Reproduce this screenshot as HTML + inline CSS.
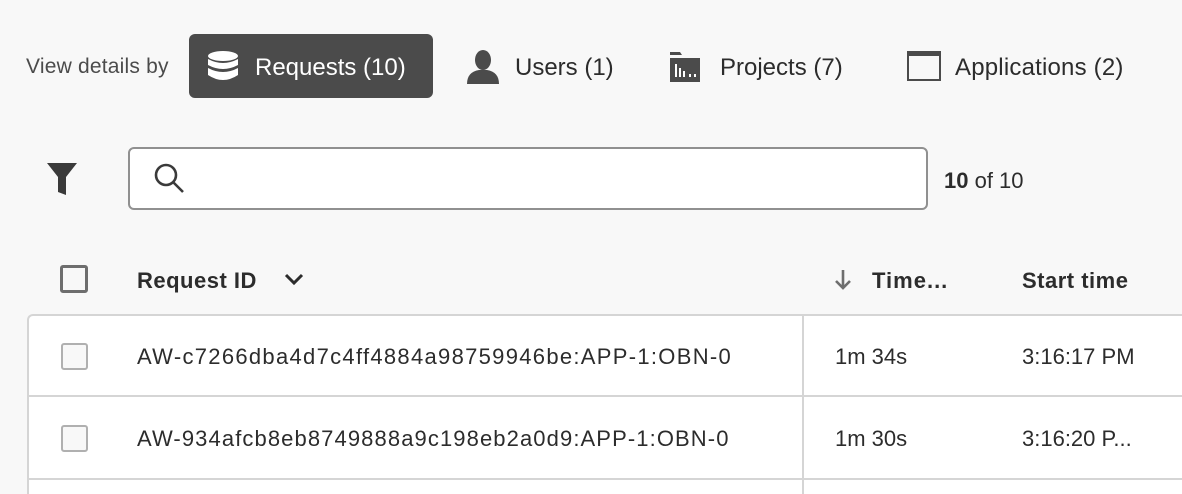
<!DOCTYPE html>
<html style="width:1182px;height:494px;overflow:hidden"><head><meta charset="utf-8"><style>
*{margin:0;padding:0;box-sizing:border-box}
body{width:1182px;height:494px;background:#f8f8f8;font-family:"Liberation Sans",sans-serif;color:#2c2c2c;position:relative;overflow:hidden}
.a{position:absolute;white-space:nowrap}
.tab{font-size:24px;color:#2c2c2c;top:54px}
.row{position:absolute;left:27px;width:1200px;height:83px;background:#fff;border-left:2px solid #d5d5d5;border-bottom:2px solid #d5d5d5}
.cb{position:absolute;left:61px;width:27px;height:27px;border:2px solid #b0b0b0;border-radius:3px;background:#f8f8f8}
.cell{position:absolute;font-size:22px;color:#2c2c2c;white-space:nowrap}
</style></head><body>
<div class="a" style="left:26px;top:55px;font-size:21px;color:#4b4b4b;letter-spacing:0.2px">View details by</div>
<div class="a" style="left:189px;top:34px;width:244px;height:64px;background:#4b4b4b;border-radius:6px"></div>
<svg class="a" style="left:206px;top:50px" width="34" height="32" viewBox="0 0 34 32"><ellipse cx="17" cy="6" rx="15" ry="5" fill="#fff"/><path d="M2 9 q15 8 30 0 v6 q-15 8 -30 0z" fill="#fff"/><path d="M2 18 q15 8 30 0 v7 q-15 10 -30 0z" fill="#fff"/></svg>
<div class="a tab" style="left:255px;color:#fff">Requests (10)</div>
<svg class="a" style="left:466px;top:50px" width="34" height="34" viewBox="0 0 34 34"><ellipse cx="17" cy="10" rx="8" ry="10" fill="#4b4b4b"/><path d="M1 34 q0-12 12-14 h8 q12 2 12 14z" fill="#4b4b4b"/></svg>
<div class="a tab" style="left:515px">Users (1)</div>
<svg class="a" style="left:670px;top:52px" width="32" height="30" viewBox="0 0 32 30"><path d="M0 0h10l2 3H0z M0 6h30v24H0z" fill="#4b4b4b"/><rect x="5" y="12" width="2" height="13" fill="#fff"/><rect x="9" y="16" width="2" height="9" fill="#fff"/><rect x="13" y="19" width="2" height="6" fill="#fff"/><rect x="19" y="22" width="2" height="3" fill="#fff"/><rect x="24" y="22" width="2" height="3" fill="#fff"/></svg>
<div class="a tab" style="left:720px">Projects (7)</div>
<svg class="a" style="left:907px;top:51px" width="34" height="30" viewBox="0 0 34 30"><rect x="1" y="1" width="32" height="28" fill="none" stroke="#4b4b4b" stroke-width="2"/><rect x="1" y="1" width="32" height="4" fill="#4b4b4b"/></svg>
<div class="a tab" style="left:955px;letter-spacing:0.2px">Applications (2)</div>
<svg class="a" style="left:46px;top:163px" width="32" height="32" viewBox="0 0 32 32"><path d="M1 0h30L20 14v18l-8-3V14z" fill="#3a3a3a"/></svg>
<div class="a" style="left:128px;top:147px;width:800px;height:63px;border:2px solid #909090;border-radius:6px;background:#fff"></div>
<svg class="a" style="left:151px;top:160px" width="36" height="36" viewBox="0 0 36 36"><circle cx="15" cy="15" r="10" fill="none" stroke="#3a3a3a" stroke-width="2.6"/><path d="M22 22l10 10" stroke="#3a3a3a" stroke-width="2.6"/></svg>
<div class="a" style="left:944px;top:168px;font-size:22px"><b>10</b> of 10</div>
<div class="a" style="left:60px;top:265px;width:28px;height:28px;border:3px solid #6e6e6e;border-radius:3px"></div>
<div class="a" style="left:137px;top:268px;font-size:22px;font-weight:bold;letter-spacing:0.5px">Request ID</div>
<svg class="a" style="left:284px;top:273px" width="20" height="14" viewBox="0 0 20 14"><path d="M2 2l8 8 8-8" fill="none" stroke="#2c2c2c" stroke-width="3"/></svg>
<svg class="a" style="left:834px;top:269px" width="18" height="22" viewBox="0 0 18 22"><path d="M9 1v18M2 12l7 7 7-7" fill="none" stroke="#6e6e6e" stroke-width="2.6"/></svg>
<div class="a" style="left:872px;top:268px;font-size:22px;font-weight:bold;letter-spacing:1px">Time...</div>
<div class="a" style="left:1022px;top:268px;font-size:22px;font-weight:bold;letter-spacing:0.5px">Start time</div>
<div class="row" style="top:314px;border-top:2px solid #d5d5d5;border-top-left-radius:6px"></div>
<div class="row" style="top:397px"></div>
<div class="row" style="top:480px;height:14px;border-bottom:none"></div>
<div class="a" style="left:802px;top:316px;width:2px;height:178px;background:#d5d5d5"></div>
<div class="cb" style="top:343px"></div>
<div class="cb" style="top:425px"></div>
<div class="cell" style="left:137px;top:344px;letter-spacing:1.3px">AW-c7266dba4d7c4ff4884a98759946be:APP-1:OBN-0</div>
<div class="cell" style="left:137px;top:426px;letter-spacing:1.1px">AW-934afcb8eb8749888a9c198eb2a0d9:APP-1:OBN-0</div>
<div class="cell" style="left:835px;top:344px">1m 34s</div>
<div class="cell" style="left:835px;top:426px">1m 30s</div>
<div class="cell" style="left:1022px;top:344px">3:16:17 PM</div>
<div class="cell" style="left:1022px;top:426px">3:16:20 P...</div>
</body></html>
